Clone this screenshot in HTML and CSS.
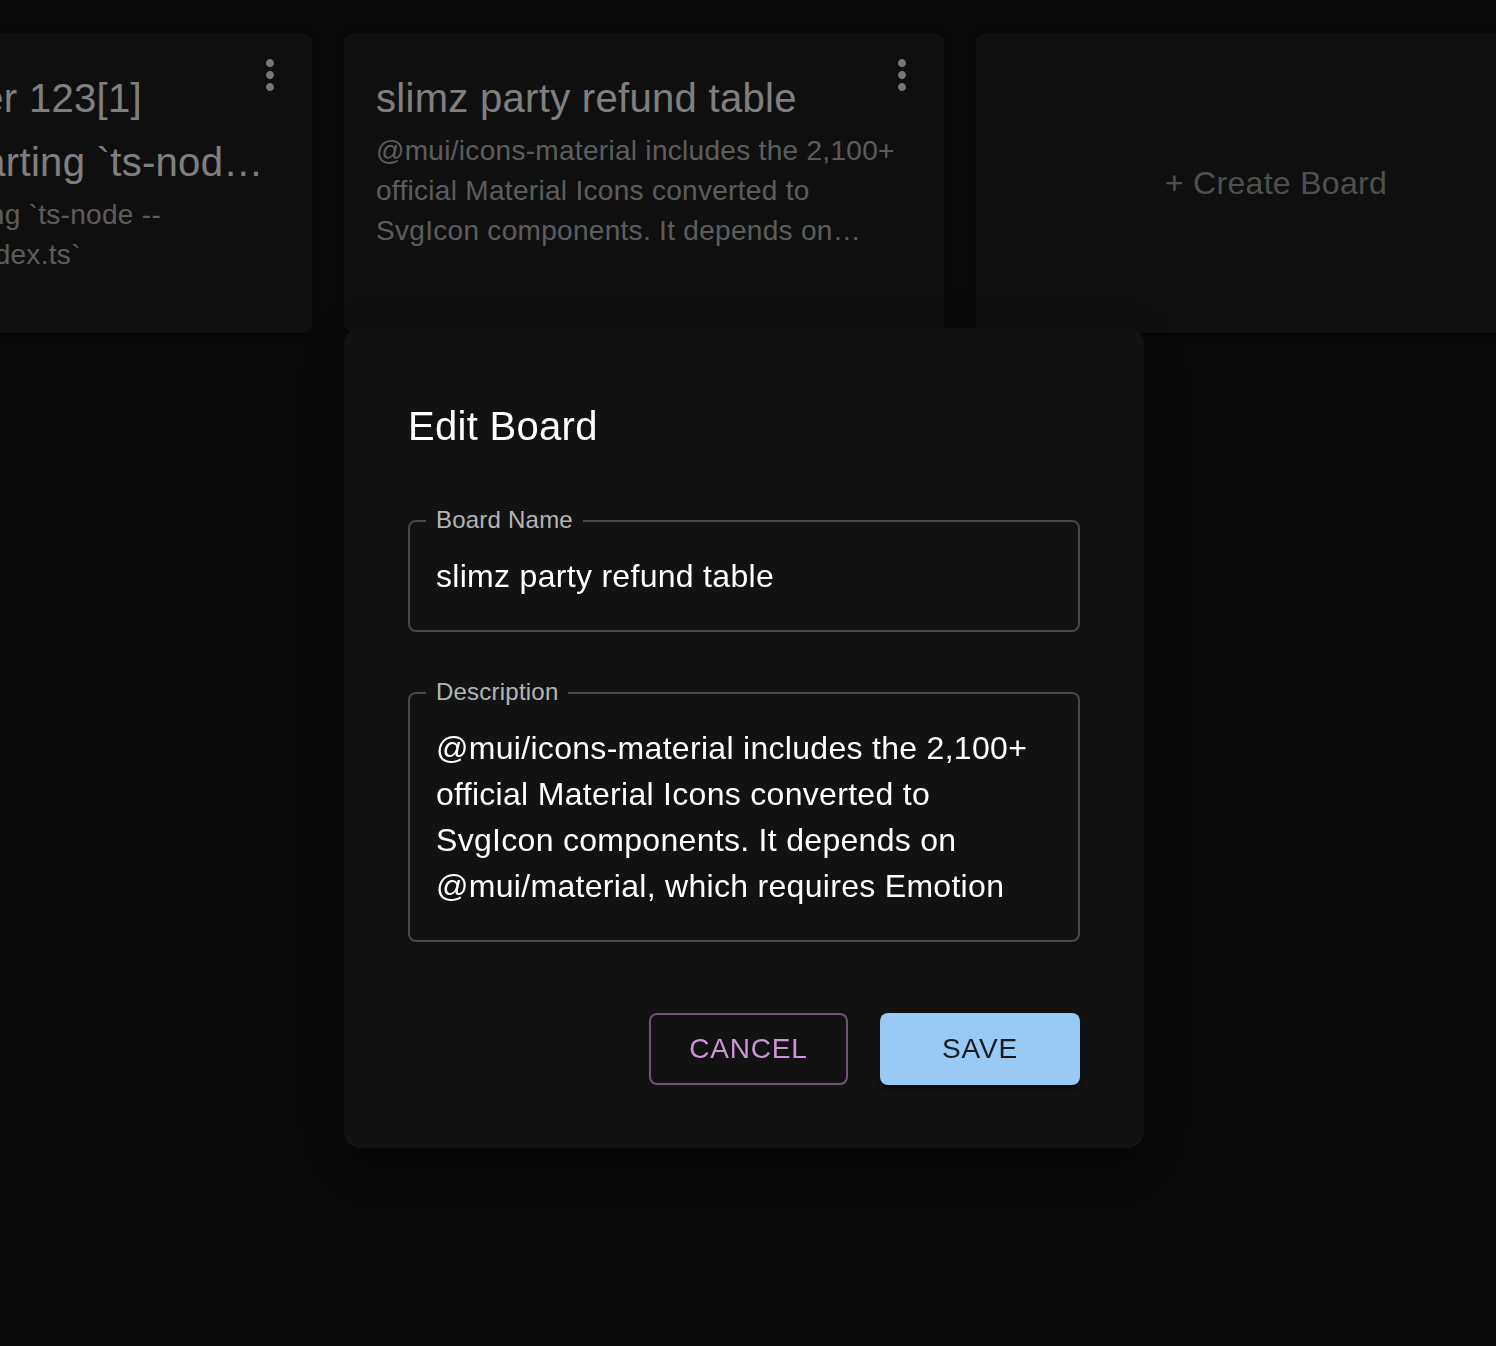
FILE: index.html
```html
<!DOCTYPE html>
<html lang="en">
<head>
<meta charset="utf-8">
<title>Boards – Edit Board</title>
<link rel="stylesheet" href="styles.css">
</head>
<body>
<main class="page">
  <section class="board-row" id="boardRow">
    <article class="board-card">
      <button class="card-menu" type="button" aria-label="More options">
        <svg viewBox="0 0 24 24" aria-hidden="true"><path d="M12 8c1.1 0 2-.9 2-2s-.9-2-2-2-2 .9-2 2 .9 2 2 2zm0 2c-1.1 0-2 .9-2 2s.9 2 2 2 2-.9 2-2-.9-2-2-2zm0 6c-1.1 0-2 .9-2 2s.9 2 2 2 2-.9 2-2-.9-2-2-2z"/></svg>
      </button>
      <h2 class="card-title">Project Tracker 123[1] Debugging starting `ts-nod…</h2>
      <p class="card-desc">Chokes when running `ts-node --transpileOnly dist/index.ts`</p>
    </article>
    <article class="board-card">
      <button class="card-menu" type="button" aria-label="More options">
        <svg viewBox="0 0 24 24" aria-hidden="true"><path d="M12 8c1.1 0 2-.9 2-2s-.9-2-2-2-2 .9-2 2 .9 2 2 2zm0 2c-1.1 0-2 .9-2 2s.9 2 2 2 2-.9 2-2-.9-2-2-2zm0 6c-1.1 0-2 .9-2 2s.9 2 2 2 2-.9 2-2-.9-2-2-2z"/></svg>
      </button>
      <h2 class="card-title">slimz party refund table</h2>
      <p class="card-desc">@mui/icons-material includes the 2,100+ official Material Icons converted to SvgIcon components. It depends on @mui/material, which requires Emotion</p>
    </article>
    <button class="board-card create-card" type="button">+ Create Board</button>
  </section>
</main>

<div class="backdrop"></div>
<div class="dialog-layer" role="presentation">
  <div class="dialog" role="dialog" aria-labelledby="dialogTitle">
    <h2 class="dialog-title" id="dialogTitle">Edit Board</h2>
    <div class="field">
      <label class="field-label" for="boardName">Board Name</label>
      <input class="field-input" id="boardName" type="text" value="slimz party refund table">
    </div>
    <div class="field">
      <label class="field-label" for="boardDesc">Description</label>
      <textarea class="field-textarea" id="boardDesc" rows="4">@mui/icons-material includes the 2,100+ official Material Icons converted to SvgIcon components. It depends on @mui/material, which requires Emotion</textarea>
    </div>
    <div class="dialog-actions">
      <button class="btn btn-outline" type="button">CANCEL</button>
      <button class="btn btn-primary" type="button">SAVE</button>
    </div>
  </div>
</div>
<script>document.getElementById('boardRow').scrollLeft = 320;</script>
</body>
</html>
```
FILE: styles.css
```css
* {
  box-sizing: border-box;
}

html,
body {
  margin: 0;
  height: 100%;
}

body {
  background: #121212;
  color: #fff;
  font-family: "Liberation Sans", Arial, Helvetica, sans-serif;
  overflow: hidden;
}

.page {
  height: 100vh;
}

/* Board strip (horizontally scrolled) */
.board-row {
  display: flex;
  gap: 32px;
  padding: 33px 32px;
  overflow-x: auto;
  scrollbar-width: none;
}

.board-row::-webkit-scrollbar {
  display: none;
}

.board-card {
  position: relative;
  flex: 0 0 600px;
  height: 300px;
  margin: 0;
  padding: 33px 32px 32px;
  background: #1e1e1e;
  border-radius: 10px;
  box-shadow: 0 4px 2px -2px rgba(0, 0, 0, 0.2), 0 2px 2px 0 rgba(0, 0, 0, 0.14), 0 2px 6px 0 rgba(0, 0, 0, 0.12);
}

.card-title {
  margin: 0;
  font-size: 40px;
  line-height: 64px;
  font-weight: 400;
  letter-spacing: 0.3px;
  color: #fff;
  display: -webkit-box;
  -webkit-box-orient: vertical;
  -webkit-line-clamp: 2;
  overflow: hidden;
}

.card-desc {
  margin: 1px 0 0;
  font-size: 28px;
  line-height: 40px;
  letter-spacing: 0.3px;
  color: rgba(255, 255, 255, 0.7);
  display: -webkit-box;
  -webkit-box-orient: vertical;
  -webkit-line-clamp: 3;
  overflow: hidden;
}

.card-menu {
  position: absolute;
  top: 18px;
  right: 18px;
  width: 48px;
  height: 48px;
  padding: 0;
  border: 0;
  background: none;
  color: #eeeeee;
}

.card-menu svg {
  display: block;
  width: 48px;
  height: 48px;
  fill: currentColor;
}

.create-card {
  display: flex;
  align-items: center;
  justify-content: center;
  border: 0;
  padding: 0;
  font-family: "Liberation Sans", Arial, Helvetica, sans-serif;
  font-size: 32px;
  letter-spacing: 0.3px;
  color: #9e9e9e;
}

/* Modal */
.backdrop {
  position: fixed;
  inset: 0;
  background: rgba(0, 0, 0, 0.5);
}

.dialog-layer {
  position: fixed;
  inset: 0;
  display: flex;
  justify-content: center;
  align-items: flex-start;
  padding: 328px 8px 0 0;
}

.dialog {
  width: 800px;
  padding: 66px 64px 63px;
  background: #121212;
  border-radius: 16px;
  box-shadow: 0 11px 15px -7px rgba(0, 0, 0, 0.2), 0 24px 38px 3px rgba(0, 0, 0, 0.14), 0 9px 46px 8px rgba(0, 0, 0, 0.12);
}

.dialog-title {
  margin: 0 0 62px;
  font-size: 40px;
  line-height: 64px;
  font-weight: 400;
  letter-spacing: 0.3px;
  color: #fff;
}

.field {
  position: relative;
  border: 2px solid rgba(255, 255, 255, 0.23);
  border-radius: 8px;
}

.field + .field {
  margin-top: 60px;
}

.field-label {
  position: absolute;
  top: -17px;
  left: 16px;
  padding: 0 10px;
  background: #121212;
  font-size: 24px;
  line-height: 30px;
  letter-spacing: 0.22px;
  color: rgba(255, 255, 255, 0.7);
}

.field-input,
.field-textarea {
  display: block;
  width: 100%;
  margin: 0;
  border: 0;
  background: transparent;
  color: #fff;
  font-family: "Liberation Sans", Arial, Helvetica, sans-serif;
  font-size: 32px;
  line-height: 46px;
  letter-spacing: 0.3px;
  outline: none;
}

.field-input {
  height: 108px;
  padding: 0 26px;
}

.field-textarea {
  height: 246px;
  padding: 31px 26px;
  resize: none;
  overflow: hidden;
}

.dialog-actions {
  display: flex;
  justify-content: flex-end;
  gap: 32px;
  margin-top: 71px;
}

.btn {
  height: 72px;
  border-radius: 8px;
  font-family: "Liberation Sans", Arial, Helvetica, sans-serif;
  font-size: 28px;
  letter-spacing: 0.8px;
  padding: 0;
}

.btn-outline {
  width: 199px;
  border: 2px solid rgba(206, 147, 216, 0.5);
  background: transparent;
  color: #ce93d8;
}

.btn-primary {
  width: 200px;
  border: 0;
  background: #99c9f5;
  color: rgba(0, 0, 0, 0.87);
  box-shadow: 0 6px 2px -4px rgba(0, 0, 0, 0.2), 0 4px 4px 0 rgba(0, 0, 0, 0.14), 0 2px 10px 0 rgba(0, 0, 0, 0.12);
}
```
